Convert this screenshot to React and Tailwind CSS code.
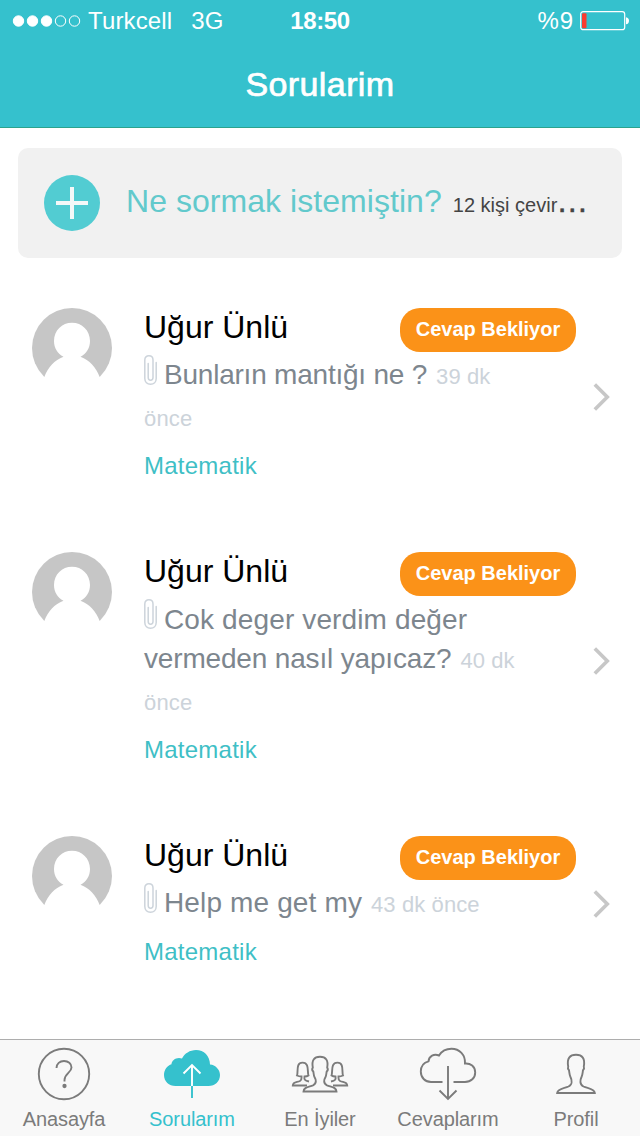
import clsx from "clsx";

const questions = [
  {
    id: 1,
    name: "Uğur Ünlü",
    lines: [{ text: "Bunların mantığı ne ?", spacing: "tracking-[-0.22px]" }],
    time: "39 dk",
    rest: "önce",
  },
  {
    id: 2,
    name: "Uğur Ünlü",
    lines: [
      { text: "Cok deger verdim değer", spacing: "tracking-[0.13px]" },
      { text: "vermeden nasıl yapıcaz?", spacing: "tracking-[-0.17px]" },
    ],
    time: "40 dk",
    rest: "önce",
  },
  {
    id: 3,
    name: "Uğur Ünlü",
    lines: [{ text: "Help me get my", spacing: "tracking-[0.14px]" }],
    time: "43 dk önce",
  },
];

function Avatar() {
  return (
    <svg className="h-20 w-20 shrink-0" viewBox="0 0 80 80">
      <circle cx="40" cy="40" r="40" fill="#c6c6c6" />
      <path d="M12.300 69C16 59.500 22.500 52 31.500 48.700C25.500 45.500 22 40 22 33C22 22.500 30 14.800 40 14.800S58 22.500 58 33C58 40 54.500 45.500 48.500 48.700C57.500 52 64 59.500 67.700 69V81H12.300Z" fill="#fff" />
      <path d="M0 69H80V80H0Z" fill="#fff" />
    </svg>
  );
}

function Paperclip() {
  return (
    <svg className="mr-[7px] -mt-3 h-[30px] w-[13px] shrink-0" viewBox="0 0 13 30" fill="none" stroke="#cdd4db" strokeWidth="1.500" strokeLinecap="round">
      <path d="M12.200 7.500V23.500C12.200 27 9.800 29.200 6.500 29.200S.8 27 .8 23.500V5C.8 2.300 2.500.8 4.900.8S9 2.300 9 5V22.500C9 24.200 8 25.200 6.600 25.200S4.200 24.200 4.200 22.500V8.500" />
    </svg>
  );
}

function Question({ name, lines, time, rest }) {
  return (
    <article className="flex items-start pl-8 pr-[30px]">
      <Avatar />
      <div className="ml-8 min-w-0 flex-1">
        <div className="flex h-10 items-start justify-between">
          <h2 className="text-[32px] leading-[38px] text-black">{name}</h2>
          <span className="mr-[17px] h-11 w-44 shrink-0 rounded-[20px] bg-[#fb9218] text-center text-[20px] leading-[43px] font-bold text-white">
            Cevap Bekliyor
          </span>
        </div>
        <div className="mt-2 text-[28px] whitespace-nowrap text-[#7d868e]">
          {lines.map((line, i) => (
            <p key={line.text} className="flex h-10 items-center leading-10">
              {i === 0 && <Paperclip />}
              <span className="flex items-baseline">
                <span className={line.spacing}>{line.text}</span>
                {i === lines.length - 1 && (
                  <span className="ml-[9px] text-[22px] tracking-[0.1px] text-[#ccd3da]">{time}</span>
                )}
              </span>
            </p>
          ))}
          {rest && <p className="h-[42px] text-[22px] leading-[45px] tracking-[0.2px] text-[#ccd3da]">{rest}</p>}
        </div>
        <p className="mt-2 text-[24px] leading-10 tracking-[0.25px] text-[#3fbfc6]">Matematik</p>
      </div>
      <svg className="h-7 w-[17px] shrink-0 self-center" viewBox="0 0 17 28" fill="none" stroke="#c7c7c7" strokeWidth="3.600">
        <path d="M1.800 1.500L14.300 14L1.800 26.500" />
      </svg>
    </article>
  );
}

const tabs = [
  {
    label: "Anasayfa",
    icon: (
      <>
        <circle cx="32" cy="30" r="25.200" />
        <path d="M24.500 24C24.500 19.700 27.800 17 32 17S39.500 19.700 39.500 23.500C39.500 28.500 32.500 29.500 32.500 36V37.500" />
        <circle cx="32.500" cy="42" r="1.200" fill="currentColor" />
      </>
    ),
  },
  {
    label: "Sorularım",
    active: true,
    icon: (
      <>
        <path d="M15.500 42C9 42 4 37.500 4 31C4 25.500 7.500 21.500 11.500 20.300C11.500 16 17 12.500 22 14.500C24.500 9.500 30 6 36 6C44 6 50 12 50 20.500C55.500 21 60 25.500 60 31C60 37.500 55 42 48.500 42Z" fill="currentColor" stroke="none" />
        <path d="M32 42V54" />
        <path d="M32 42V21M23.500 29.500L32 21L40.500 29.500" stroke="#fff" />
      </>
    ),
  },
  {
    label: "En İyiler",
    icon: (
      <>
        <path d="M15.500 47.500C15.700 43 20.500 43 25 41.300C29 39.500 28 35.500 26.500 33C25.500 31 25.700 29 25.300 27.500C24 26.500 24.200 24.500 24.800 23.500C23.500 16.500 26 12.800 32 12.800S40.500 16.500 39.200 23.500C39.800 24.500 40 26.500 38.700 27.500C38.300 29 38.500 31 37.500 33C36 35.500 35 39.500 39 41.300C43.500 43 48.300 43 48.500 47.500Z" />
        <path d="M19 41.500H4.800C5 37.500 9 38.500 12 37C14 36 13.500 34.500 13.500 32.500C11.800 32.500 10 32 9 31.500C10.500 28 7.500 18.600 14.600 18.600S19 28 20.500 31.500C19.500 32.200 18 32.500 16.500 32.500C16 35.500 16.500 36.500 21 37.500" />
        <path d="M45 41.500H59.200C59 37.500 55 38.500 52 37C50 36 50.500 34.500 50.500 32.500C52.200 32.500 54 32 55 31.500C53.500 28 56.500 18.600 49.400 18.600S45 28 43.500 31.500C44.500 32.200 46 32.500 47.500 32.500C48 35.500 47.500 36.500 43 37.500" />
      </>
    ),
  },
  {
    label: "Cevaplarım",
    icon: (
      <>
        <path d="M26.500 38H15C9 38 4.800 33.500 4.800 27.500C4.800 22 8 18.500 12.500 17.300C13 12 18 9.500 23 11.500C25.500 7.500 30 4.800 35.500 4.800C43.500 4.800 49.500 11 49 19.500C54.500 19 59.200 22.500 59.200 28.500C59.200 34 55 38 49 38H37.500" />
        <path d="M32 22V55M23.500 46.500L32 55L40.500 46.500" />
      </>
    ),
  },
  {
    label: "Profil",
    icon: (
      <path d="M13.200 49C13.800 44.500 20 44.500 24.500 42.500C28.500 40.500 28 36 26.500 33C25.200 30 25.400 28 25 26.300C23.600 25 23.800 23.500 24.200 22.500C22.700 14.500 25.800 10.800 32 10.800S41.300 14.500 39.800 22.500C40.200 23.500 40.400 25 39 26.300C38.600 28 38.800 30 37.500 33C36 36 35.500 40.500 39.500 42.500C44 44.500 50.200 44.500 50.800 49Z" />
    ),
  },
];

export default function App() {
  return (
    <div className="flex h-[1136px] w-[640px] flex-col overflow-hidden bg-white font-['Liberation_Sans',Arial,sans-serif]">
      <header className="h-32 shrink-0 border-b border-[#2ba38d] bg-[#35c1cd] text-white">
        <div className="grid h-[42px] grid-cols-3 items-center text-[24px] leading-[42px]">
          <div className="flex items-center whitespace-nowrap">
            <svg className="ml-3 h-3 w-[69px] shrink-0" viewBox="0 0 69 12" fill="none" stroke="#fff">
              <circle cx="6.500" cy="6" r="5.200" fill="#fff" />
              <circle cx="20.500" cy="6" r="5.200" fill="#fff" />
              <circle cx="34.500" cy="6" r="5.200" fill="#fff" />
              <circle cx="48.500" cy="6" r="5.200" />
              <circle cx="62.500" cy="6" r="5.200" />
            </svg>
            <span className="ml-[7px] tracking-[0.15px]">Turkcell</span>
            <span className="ml-[19px]">3G</span>
          </div>
          <span className="text-center font-bold tracking-[-0.4px]">18:50</span>
          <div className="flex items-center justify-end">
            <span className="tracking-[0.9px]">%9</span>
            <svg className="mr-[10px] ml-[6px] h-5 w-[50px]" viewBox="0 0 50 20">
              <rect x=".7" y=".7" width="44" height="18" rx="2.500" fill="none" stroke="#fff" strokeWidth="1.200" />
              <rect x="2" y="2.200" width="4.500" height="15" rx="1" fill="#fb3b30" />
              <path d="M46 6.200C50 6.500 50 13 46 13.300Z" fill="#fff" />
            </svg>
          </div>
        </div>
        <h1 className="mt-[22px] text-center text-[34px] leading-10 tracking-[0.4px] [-webkit-text-stroke:0.7px_white]">Sorularim</h1>
      </header>

      <main className="min-h-0 flex-1 pt-5">
        <div className="mx-[18px] flex h-[110px] items-center rounded-[10px] bg-[#f1f1f1] pl-[26px]">
          <svg className="h-14 w-14 shrink-0" viewBox="0 0 56 56">
            <circle cx="28" cy="28" r="28" fill="#52ccd2" />
            <path d="M28 12V44M12 28H44" stroke="#f4f8f8" strokeWidth="4" />
          </svg>
          <p className="ml-[26px] flex items-baseline text-[32px] leading-10 whitespace-nowrap text-[#62c9cc]">
            <span className="tracking-[0.05px]">Ne sormak istemiştin?</span>
            <span className="ml-[11px] text-[20px] text-[#444]">12 kişi çevir</span>
            <span className="-ml-px text-[#444] [-webkit-text-stroke:0.5px_#444]">…</span>
          </p>
        </div>

        <div className="mt-[50px] flex flex-col gap-[66px]">
          {questions.map((q) => (
            <Question key={q.id} {...q} />
          ))}
        </div>
      </main>

      <nav className="grid h-[97px] shrink-0 grid-cols-5 border-t border-[#adadad] bg-[#f8f8f8]">
        {tabs.map((tab) => (
          <div key={tab.label} className={clsx("flex flex-col items-center pt-1", tab.active ? "text-[#35c1cd]" : "text-[#7b7b7b]")}>
            <svg className="h-[60px] w-16" viewBox="0 0 64 60" fill="none" stroke="currentColor" strokeWidth="1.900">
              {tab.icon}
            </svg>
            <span className="text-[20px] leading-[30px] tracking-[-0.1px]">{tab.label}</span>
          </div>
        ))}
      </nav>
    </div>
  );
}
